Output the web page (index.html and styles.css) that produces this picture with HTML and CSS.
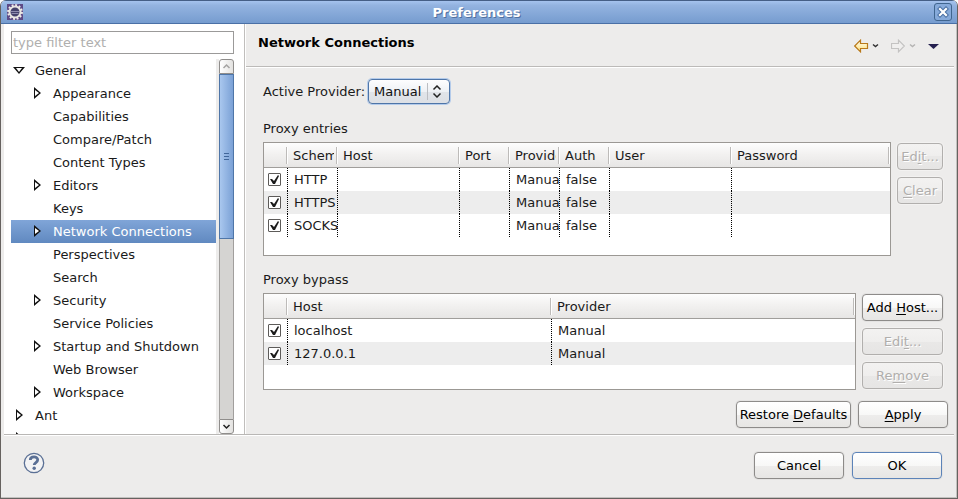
FILE: index.html
```html
<!DOCTYPE html>
<html lang="en">
<head>
<meta charset="utf-8">
<title>Preferences</title>
<link rel="stylesheet" href="styles.css">
</head>
<body>
<div class="window">
  <header class="titlebar">
    <svg class="app-icon" width="16" height="16" viewBox="0 0 16 16" aria-hidden="true">
      <rect width="16" height="16" fill="#5d4a86"/>
      <circle cx="8" cy="8" r="6.800" fill="none" stroke="#f0ede8" stroke-width="2.200" stroke-dasharray="1.900 1.660"/>
      <circle cx="8" cy="8" r="5.500" fill="#45416b" stroke="#e9e6e2" stroke-width="2"/>
      <path d="M4 7.500h8M4.500 9.500h7" stroke="#8f8cae"/>
    </svg>
    <h1 class="title">Preferences</h1>
    <button class="close" type="button" aria-label="Close">
      <svg width="16" height="16" viewBox="0 0 16 16">
        <path d="M5 5l6 6M11 5l-6 6" stroke="#4a70a3" stroke-width="4.200" stroke-linecap="square"/>
        <path d="M5 5l6 6M11 5l-6 6" stroke="#fff" stroke-width="2.200" stroke-linecap="square"/>
      </svg>
    </button>
  </header>

  <div class="body">
    <nav class="sidebar">
      <input class="filter" type="text" placeholder="type filter text" aria-label="Filter">
      <div class="tree-area">
        <ul class="tree">
          <li class="open">General
            <ul>
              <li class="closed">Appearance</li>
              <li>Capabilities</li>
              <li>Compare/Patch</li>
              <li>Content Types</li>
              <li class="closed">Editors</li>
              <li>Keys</li>
              <li class="closed selected">Network Connections</li>
              <li>Perspectives</li>
              <li>Search</li>
              <li class="closed">Security</li>
              <li>Service Policies</li>
              <li class="closed">Startup and Shutdown</li>
              <li>Web Browser</li>
              <li class="closed">Workspace</li>
            </ul>
          </li>
          <li class="closed">Ant</li>
          <li class="closed"></li>
        </ul>
        <div class="scrollbar">
          <div class="step up"><svg width="13" height="13" viewBox="0 0 13 13"><path d="M3.500 8L6.500 5l3 3" fill="none" stroke="#a5a4a3" stroke-width="1.500"/></svg></div>
          <div class="thumb"><i class="grip"></i></div>
          <div class="trough"></div>
          <div class="step down"><svg width="13" height="13" viewBox="0 0 13 13"><path d="M3.500 5L6.500 8l3-3" fill="none" stroke="#222" stroke-width="1.500"/></svg></div>
        </div>
      </div>
    </nav>

    <main class="page">
      <div class="page-head">
        <h2 class="page-title">Network Connections</h2>
        <div class="tools">
          <button class="tool" type="button" aria-label="Back">
            <svg width="26" height="14" viewBox="0 0 26 14">
              <defs><linearGradient id="gold" x2="0" y2="1"><stop offset="0" stop-color="#fffef0"/><stop offset="1" stop-color="#ffe07c"/></linearGradient></defs>
              <path d="M.7 7L6.500 1.200V4.500h7v5h-7v3.300z" fill="url(#gold)" stroke="#b9791a" stroke-width="1.200"/>
              <path d="M19 5.500l2.500 2 2.500-2" fill="none" stroke="#333" stroke-width="1.500"/>
            </svg>
          </button>
          <button class="tool" type="button" aria-label="Forward" disabled>
            <svg width="26" height="14" viewBox="0 0 26 14">
              <path d="M13.300 7L7.500 1.200V4.500h-7v5h7v3.300z" fill="#f0efee" stroke="#c4c3c2" stroke-width="1.200"/>
              <path d="M19 5.500l2.500 2 2.500-2" fill="none" stroke="#b5b4b3" stroke-width="1.500"/>
            </svg>
          </button>
          <button class="tool" type="button" aria-label="Menu">
            <svg width="11" height="14" viewBox="0 0 11 14"><path d="M0 5h11L5.500 10z" fill="#25204f"/></svg>
          </button>
        </div>
      </div>

      <div class="content">
        <div class="provider">
          <label for="provider">Active Provider:</label>
          <span class="combo">
            <select id="provider"><option>Manual</option><option>Direct</option><option>Native</option></select>
            <svg class="arrows" width="10" height="13" viewBox="0 0 10 13"><path d="M1.500 4.500L5 1l3.500 3.500M1.500 8.500L5 12l3.500-3.500" fill="none" stroke="#222" stroke-width="1.500"/></svg>
          </span>
        </div>

        <h3 class="caption">Proxy entries</h3>
        <section class="group">
          <div class="table-box entries">
            <table>
              <colgroup><col class="c-check"><col class="c-short"><col class="c-long"><col class="c-short"><col class="c-short"><col class="c-short"><col class="c-long"><col></colgroup>
              <thead><tr><th></th><th><span>Schema</span></th><th><span>Host</span></th><th><span>Port</span></th><th><span>Provider</span></th><th><span>Auth</span></th><th><span>User</span></th><th><span>Password</span></th></tr></thead>
              <tbody>
                <tr><td><input type="checkbox" checked aria-label="HTTP"></td><td>HTTP</td><td></td><td></td><td>Manual</td><td>false</td><td></td><td></td></tr>
                <tr><td><input type="checkbox" checked aria-label="HTTPS"></td><td>HTTPS</td><td></td><td></td><td>Manual</td><td>false</td><td></td><td></td></tr>
                <tr><td><input type="checkbox" checked aria-label="SOCKS"></td><td>SOCKS</td><td></td><td></td><td>Manual</td><td>false</td><td></td><td></td></tr>
              </tbody>
            </table>
          </div>
          <div class="actions narrow">
            <button class="btn" type="button" disabled>Ed<u>i</u>t...</button>
            <button class="btn" type="button" disabled><u>C</u>lear</button>
          </div>
        </section>

        <h3 class="caption">Proxy bypass</h3>
        <section class="group">
          <div class="table-box bypass">
            <table>
              <colgroup><col class="c-check"><col class="c-host"><col></colgroup>
              <thead><tr><th></th><th><span>Host</span></th><th><span>Provider</span></th></tr></thead>
              <tbody>
                <tr><td><input type="checkbox" checked aria-label="localhost"></td><td>localhost</td><td>Manual</td></tr>
                <tr><td><input type="checkbox" checked aria-label="127.0.0.1"></td><td>127.0.0.1</td><td>Manual</td></tr>
              </tbody>
            </table>
          </div>
          <div class="actions">
            <button class="btn" type="button">Add <u>H</u>ost...</button>
            <button class="btn" type="button" disabled>Edi<u>t</u>...</button>
            <button class="btn" type="button" disabled>Re<u>m</u>ove</button>
          </div>
        </section>
      </div>

      <div class="page-buttons">
        <button class="btn restore" type="button">Restore <u>D</u>efaults</button>
        <button class="btn wide" type="button"><u>A</u>pply</button>
      </div>
    </main>
  </div>

  <footer class="footer">
    <button class="help" type="button" aria-label="Help">
      <svg width="22" height="22" viewBox="0 0 22 22">
        <circle cx="11" cy="11" r="9.700" fill="#f3f3f4" stroke="#5b7095" stroke-width="1.300"/>
        <path d="M7.300 8C7.300 4 14.700 4 14.700 7.800c0 2.700-3.500 2.700-3.500 5.200" fill="none" stroke="#5b7095" stroke-width="2.800"/>
        <circle cx="11.200" cy="16.300" r="1.700" fill="#5b7095"/>
      </svg>
    </button>
    <div class="footer-buttons">
      <button class="btn wide" type="button">Cancel</button>
      <button class="btn wide default" type="button">OK</button>
    </div>
  </footer>
</div>
</body>
</html>
```
FILE: styles.css
```css
* { box-sizing: border-box; }

body {
  margin: 0;
  background: #fff;
  color: #1a1a1a;
  font: 13px/23px "DejaVu Sans", sans-serif;
}

h1, h2, h3, ul { margin: 0; padding: 0; font-size: 13px; }
ul { list-style: none; }
button, input, select { font: inherit; color: inherit; margin: 0; }
button { padding: 0; }
svg { display: block; }

.window {
  display: flex;
  flex-direction: column;
  height: 100vh;
  overflow: hidden;
  background: #edeceb;
  border: 1px solid #66625f;
  border-top: 0;
  border-radius: 6px 6px 0 0;
  box-shadow: inset -1px -1px #c3c1bf;
}

/* Title bar */
.titlebar {
  display: flex;
  align-items: center;
  flex: none;
  height: 24px;
  padding: 0 5px 0 6px;
  border-top: 1px solid #455f86;
  border-bottom: 1px solid #4a70a6;
  background: linear-gradient(#a5c3ee, #93b3e0 20%, #769ccf);
}
.title {
  flex: 1;
  padding-right: 4px;
  text-align: center;
  color: #fff;
  text-shadow: 1px 1px #4f709f;
}
.close {
  width: 18px;
  height: 18px;
  border: 1px solid #40658f;
  border-radius: 3px;
  background: #86aada;
}

/* Two panes */
.body {
  display: flex;
  flex: 1;
  min-height: 0;
  margin: 0 3px;
  border-bottom: 1px solid #b9b7b5;
  box-shadow: 0 1px #fff;
}
.sidebar {
  display: flex;
  flex-direction: column;
  flex: none;
  width: 241px;
  padding: 7px 10px 0 7px;
  background: #fff;
  border-right: 1px solid #c0bebc;
}
.filter {
  flex: none;
  width: 100%;
  height: 23px;
  padding: 0 1px;
  border: 1px solid #9b9a99;
  background: #fff;
}
.filter::placeholder { color: #b0afae; opacity: 1; }

.tree-area {
  display: flex;
  flex: 1;
  min-height: 0;
  margin-top: 5px;
}
.tree { flex: 1; overflow: hidden; }
.tree li { position: relative; min-height: 23px; padding-left: 24px; white-space: nowrap; }
.tree li li { margin-left: -24px; padding-left: 42px; }
.selected { color: #fff; background: linear-gradient(#80a5d8, #6089c0); }
.closed::before, .open::before {
  content: "";
  position: absolute;
  top: 5px;
  left: 5px;
  width: 7px;
  height: 12px;
  background: #111;
  clip-path: polygon(evenodd, 0 0, 7px 6px, 0 12px, 0 0, 1px 3px, 1px 9px, 5px 6px, 1px 3px);
}
li li.closed::before { left: 23px; }
.tree li.selected::before {
  background: linear-gradient(#fff, #fff) 1px 3px / 4px 6px no-repeat #111;
  clip-path: polygon(0 0, 7px 6px, 0 12px);
}
.tree li.selected::before { background: #111; }
.tree li.selected::after {
  content: "";
  position: absolute;
  top: 8px;
  left: 24px;
  width: 4px;
  height: 6px;
  background: #fff;
  clip-path: polygon(0 0, 4px 3px, 0 6px);
}
.open::before {
  top: 8px;
  left: 2px;
  width: 12px;
  height: 7px;
  clip-path: polygon(evenodd, 0 0, 12px 0, 6px 7px, 0 0, 3px 1px, 6px 5px, 9px 1px, 3px 1px);
}

.scrollbar {
  display: flex;
  flex-direction: column;
  width: 18px;
  border-left: 3px solid #edeceb;
}
.step {
  display: grid;
  place-items: center;
  height: 15px;
  border: 1px solid #8f8d8b;
  background: linear-gradient(90deg, #fff, #e3e2e0);
}
.up { border-radius: 3px 3px 0 0; }
.down { border-radius: 0 0 3px 3px; }
.thumb {
  display: grid;
  place-items: center;
  flex: 165;
  border: 1px solid #4f76a8;
  background: linear-gradient(90deg, #a9c7ee, #7ba1d6);
}
.grip {
  width: 5px;
  height: 7px;
  background: repeating-linear-gradient(#41679b 0 1px, transparent 1px 3px);
}
.trough {
  flex: 182;
  border: solid #a19f9d;
  border-width: 0 1px;
  background: #d5d4d2;
}

/* Page header */
.page { flex: 1; min-width: 0; border-left: 1px solid #fff; }
.page-head {
  display: flex;
  justify-content: space-between;
  height: 43px;
  padding: 7px 15px 0 12px;
  border-bottom: 1px solid #bcbab8;
  box-shadow: 0 1px #fff;
}
.page-title { color: #000; }
.tools { display: flex; gap: 11px; padding-top: 8px; }
.tool { height: 14px; border: 0; background: none; }

/* Page content */
.content { padding: 12px 11px 0 17px; }
.provider { display: flex; align-items: center; gap: 3px; }
.combo { display: inline-flex; align-items: center; position: relative; }
.combo select {
  appearance: none;
  width: 82px;
  height: 25px;
  padding: 0 0 0 5px;
  border: 1px solid #4e75a8;
  border-radius: 4px;
  outline: 0;
  box-shadow: 0 0 0 1px #b4cbea;
  background:
    linear-gradient(#bbbdc2, #bbbdc2) 58px center / 1px 17px no-repeat,
    linear-gradient(#fdfdfe, #eef1f5 50%, #e1e4e9 50%, #dde0e5);
  color: #111;
}
.arrows { position: absolute; right: 8px; pointer-events: none; }
.caption { margin-top: 12px; font-weight: 400; }
.provider + .caption { margin-top: 13px; }

.group { display: flex; gap: 6px; margin-top: 2px; }
.table-box {
  flex: 1;
  min-width: 0;
  background: #fff;
  border: 1px solid #9b9894;
}
.entries { min-height: 114px; }
.bypass { min-height: 97px; }

table { width: 100%; border-collapse: collapse; table-layout: fixed; }
.c-check { width: 24px; }
.c-short { width: 50px; }
.c-long { width: 122px; }
.c-host { width: 264px; }
thead tr {
  height: 25px;
  background: linear-gradient(#fdfdfd, #f2f1f0 45%, #e6e5e4);
  box-shadow: inset 0 -1px #a09e9b;
}
th {
  padding: 0 4px 0 5px;
  text-align: left;
  font-weight: 400;
  background:
    linear-gradient(#fff, #fff) right 0 center / 1px 17px no-repeat,
    linear-gradient(#bdbbb9, #bdbbb9) right 1px center / 1px 17px no-repeat;
}
th span { display: block; overflow: hidden; white-space: nowrap; }
tbody tr:nth-child(even) { background: #ededed; }
td {
  height: 23px;
  padding: 0 0 0 6px;
  overflow: hidden;
  white-space: nowrap;
  text-overflow: clip;
}
td:first-child { padding-left: 4px; }
td:not(:last-child) {
  background: repeating-linear-gradient(#000 0 1px, transparent 1px 2px) right / 1px 100% no-repeat;
}
td input {
  appearance: none;
  display: grid;
  place-items: center;
  width: 13px;
  height: 13px;
  border: 1px solid #5d5b59;
  border-radius: 1px;
  background: #fff;
}
td input:checked::before {
  content: "";
  width: 9px;
  height: 9px;
  background: #1c1c1c;
  clip-path: polygon(0 4px, 2px 4px, 4px 6px, 8px 0, 9px 1px, 5px 9px, 3px 9px);
}

/* Buttons */
.actions {
  display: flex;
  flex-direction: column;
  gap: 7px;
  flex: none;
  width: 81px;
  padding-top: 1px;
}
.narrow { width: 46px; }
.btn {
  height: 27px;
  border: 1px solid #8d8b89;
  border-radius: 4px;
  background: linear-gradient(#fff, #f8f8f7 50%, #eeedec 50%, #e7e6e4);
  box-shadow: 0 0 0 1px #e4e3e2;
  color: #000;
  line-height: 23px;
  white-space: nowrap;
}
.btn:disabled {
  border-color: #b1afad;
  background: linear-gradient(#f3f2f1, #efeeed 50%, #e9e8e7 50%, #e6e5e4);
  box-shadow: 0 0 0 1px #f3f2f1;
  color: #b0aeac;
  text-shadow: 1px 1px #fff;
}
.btn u { text-underline-offset: 2px; }
.restore { width: 115px; }
.wide { width: 90px; }
.default { border-color: #5c83b8; }
.page-buttons {
  display: flex;
  justify-content: flex-end;
  gap: 7px;
  padding: 11px 6px 6px;
}

/* Footer */
.footer {
  display: flex;
  justify-content: space-between;
  align-items: flex-start;
  flex: none;
  height: 63px;
  padding: 17px 15px 0 22px;
}
.help { height: 22px; border: 0; background: none; }
.footer-buttons { display: flex; gap: 8px; }
```
